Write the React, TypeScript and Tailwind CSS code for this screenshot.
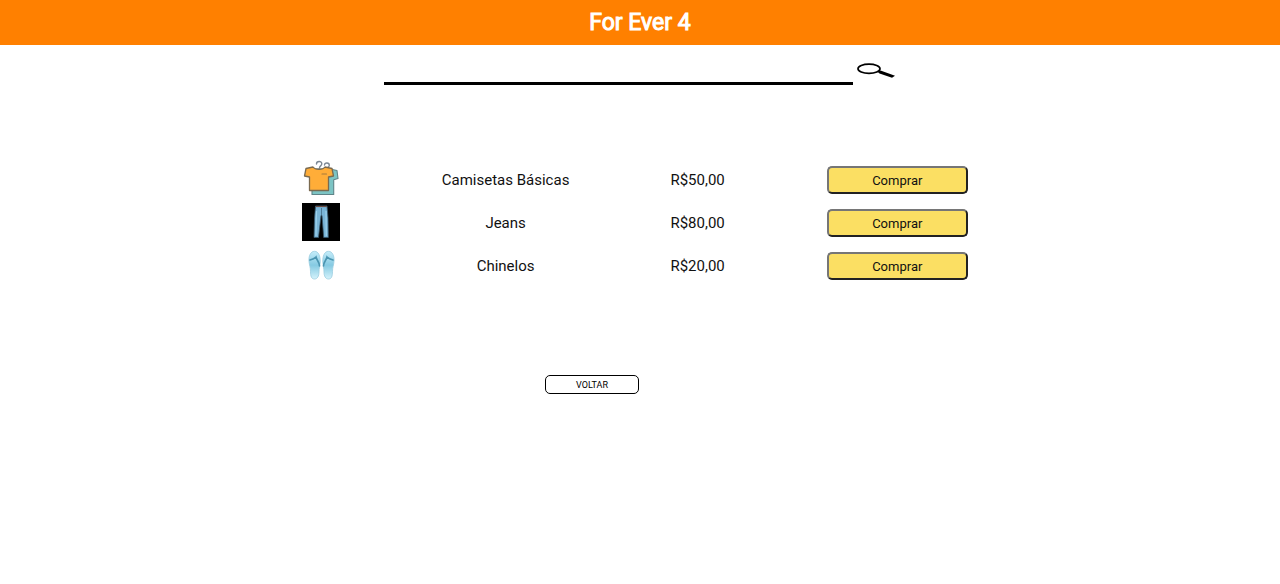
import type { ReactNode } from "react";

function ShirtIcon() {
  return (
    <svg viewBox="0 0 38 38" className="mx-auto block size-[38px]" aria-hidden="true" strokeLinejoin="round" strokeLinecap="round">
      <path d="M14 9h14l7 1.500 1 8-4.300 1.200V34.500H10V13z" fill="#7cc4c4" stroke="#5f8488" strokeWidth="1.100" />
      <path d="M14.500 4c0-3.300 5.300-3.300 5.300-.2 0 2.200-2.300 2-2.300 4.200M22.500 5c.3-2.800 4.800-2.500 4.800.3 0 2-2 1.500-2.300 3.700" fill="none" stroke="#7b8794" strokeWidth="1.400" />
      <path d="M11 7 4 8.500 2.500 16 7.500 17V30.500H26.500V17L31.500 16 30 8.500 23 7C21 10 13 10 11 7Z" fill="#ffad38" stroke="#7a6a50" strokeWidth="1.300" />
      <path d="M20 14h4.500" stroke="#a67b3c" strokeWidth="1.200" />
    </svg>
  );
}

function JeansIcon() {
  return (
    <svg viewBox="0 0 38 38" className="mx-auto block size-[38px]" aria-hidden="true">
      <rect width="38" height="38" fill="#000" />
      <path d="M13.500 3h11.500l1 12 .3 19.500h-4.600L20 12.500h-1L16.500 34.500h-4.500l.5-19z" fill="#79b4d6" stroke="#36566a" strokeWidth=".8" />
      <path d="M13.800 3.500h11" stroke="#6b4b42" strokeWidth="1.200" />
      <path d="M14.500 8 14 33M24 8l.3 25" stroke="#9bd0eb" strokeWidth="1.200" />
      <path d="M19.500 5v7" stroke="#416c86" strokeWidth=".8" />
    </svg>
  );
}

function SandalsIcon() {
  return (
    <svg viewBox="0 0 38 38" className="mx-auto block size-[38px]" aria-hidden="true">
      <defs>
        <linearGradient id="sole" x1="0" y1="0" x2="0" y2="1">
          <stop offset="0" stopColor="#c5edfa" />
          <stop offset=".5" stopColor="#85cae2" />
          <stop offset="1" stopColor="#d5f3fc" />
        </linearGradient>
      </defs>
      <g fill="url(#sole)" stroke="#9bcddf" strokeWidth=".8">
        <path d="M12.500 5.300c-4 0-6 5-5.500 10 .3 4 1.500 6 1.500 10 0 5 1 7.700 4 7.700s4.500-3 4.500-7c0-4 1-6 1.200-10C18.500 10 16.500 5.300 12.500 5.300Z" />
        <path d="M26.500 5.300c-4 0-6 4.700-5.700 10.700.2 4 1.200 6 1.200 10 0 4 1.500 7 4.500 7s4-2.700 4-7.700c0-4 1.200-6 1.500-10 .5-5-1.500-10-5.500-10Z" />
      </g>
      <g fill="none" stroke="#4a94b0" strokeWidth="1.600" strokeLinecap="round">
        <path d="M8 14c2-.5 4-1 6-3 .5 3 3.500 5 3.500 9" />
        <path d="M31 14c-2-.5-4-1-6-3-.5 3-3.500 5-3.500 9" />
      </g>
    </svg>
  );
}

function SearchIcon() {
  return (
    <svg viewBox="0 0 38 15" className="block h-[15px] w-[38px]" aria-hidden="true">
      <ellipse cx="12" cy="5.800" rx="11" ry="4.600" fill="none" stroke="#000" strokeWidth="1.700" />
      <path d="M20.500 8.800 23.500 7.600 38 12.800 35 14.800 22.500 10.600z" fill="#000" />
    </svg>
  );
}

const products: { name: string; price: string; icon: ReactNode }[] = [
  { name: "Camisetas Básicas", price: "R$50,00", icon: <ShirtIcon /> },
  { name: "Jeans", price: "R$80,00", icon: <JeansIcon /> },
  { name: "Chinelos", price: "R$20,00", icon: <SandalsIcon /> },
];

export default function App() {
  return (
    <div className="bg-white font-['Roboto',sans-serif] text-black">
      <header className="bg-[#ff8000] py-2 text-center">
        <h1 className="text-[23px] leading-[29px] font-normal text-white [-webkit-text-stroke:1px_white]">For Ever 4</h1>
      </header>
      <main className="mx-auto w-3/5">
        <form className="mx-auto flex w-2/3 items-start gap-1 pt-4" onSubmit={(e) => e.preventDefault()}>
          <input
            type="search"
            aria-label="Buscar produtos"
            className="h-6 w-[469px] min-w-0 border-b-3 border-black bg-transparent text-base outline-none"
          />
          <button type="submit" aria-label="Buscar" className="shrink-0 pt-0.5">
            <SearchIcon />
          </button>
        </form>
        <table className="mt-[74px] w-full table-fixed border-collapse text-center text-[15px] text-[#111]">
          <colgroup>
            <col className="w-[17%]" />
            <col className="w-[31%]" />
            <col className="w-[19%]" />
            <col className="w-[33%]" />
          </colgroup>
          <tbody>
            {products.map((p) => (
              <tr key={p.name} className="h-[43px]">
                <td className="p-0 pb-1">{p.icon}</td>
                <td className="p-0">{p.name}</td>
                <td className="p-0">{p.price}</td>
                <td className="p-0 pb-0.5">
                  <button
                    type="button"
                    className="h-7 w-[141px] rounded-[5px] border-2 border-t-[#767676] border-r-[#222] border-b-[#222] border-l-[#767676] bg-[#fbdf63] pt-0.5 text-[13px] leading-4"
                  >
                    Comprar
                  </button>
                </td>
              </tr>
            ))}
          </tbody>
        </table>
        <div className="flex justify-center pt-[87px] pr-24">
          <button type="button" className="h-[19px] w-[94px] rounded-[5px] border border-black bg-white text-[9px] leading-3">
            VOLTAR
          </button>
        </div>
      </main>
    </div>
  );
}
